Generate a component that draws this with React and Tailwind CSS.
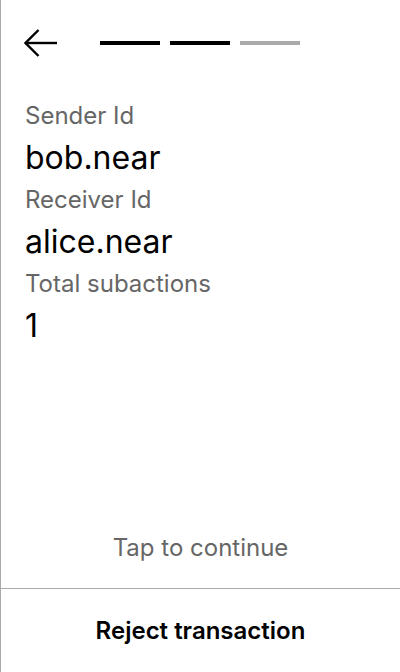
export default function App() {
  const fields = [
    { label: 'Sender Id', value: 'bob.near' },
    { label: 'Receiver Id', value: 'alice.near' },
    { label: 'Total subactions', value: '1' },
  ];

  return (
    <div
      className="flex flex-col h-[672px] w-[400px] bg-white border-l border-[#aaaaaa] text-black"
      style={{ fontFamily: 'Inter, "Noto Sans", sans-serif' }}
    >
      <div className="flex flex-1 flex-col">
        <div className="flex items-center h-[86px] pl-[23px]">
          <svg width="34" height="28" viewBox="0 0 34 28" fill="none" stroke="black" strokeWidth="2.4">
            <path d="M33 14H1.5" />
            <path d="M14.5 1L1.5 14l13 13" />
          </svg>
          <div className="flex gap-[10px] ml-[42px]">
            <div className="w-[60px] h-[4px] bg-black" />
            <div className="w-[60px] h-[4px] bg-black" />
            <div className="w-[60px] h-[4px] bg-[#aaaaaa]" />
          </div>
        </div>
        <div className="flex flex-col px-[24px] mt-[10px]">
          {fields.map((f) => (
            <div key={f.label} className="flex flex-col">
              <p className="text-[24px] leading-[40px] text-[#666666]">{f.label}</p>
              <p className="text-[32px] leading-[44px]">{f.value}</p>
            </div>
          ))}
        </div>
        <div className="flex-1" />
        <p className="text-center text-[24px] leading-[36px] text-[#666666] pb-[22px]">Tap to continue</p>
      </div>
      <div className="flex h-[84px] items-center justify-center border-t border-[#aaaaaa]">
        <span className="text-[24px] font-semibold">Reject transaction</span>
      </div>
    </div>
  );
}
